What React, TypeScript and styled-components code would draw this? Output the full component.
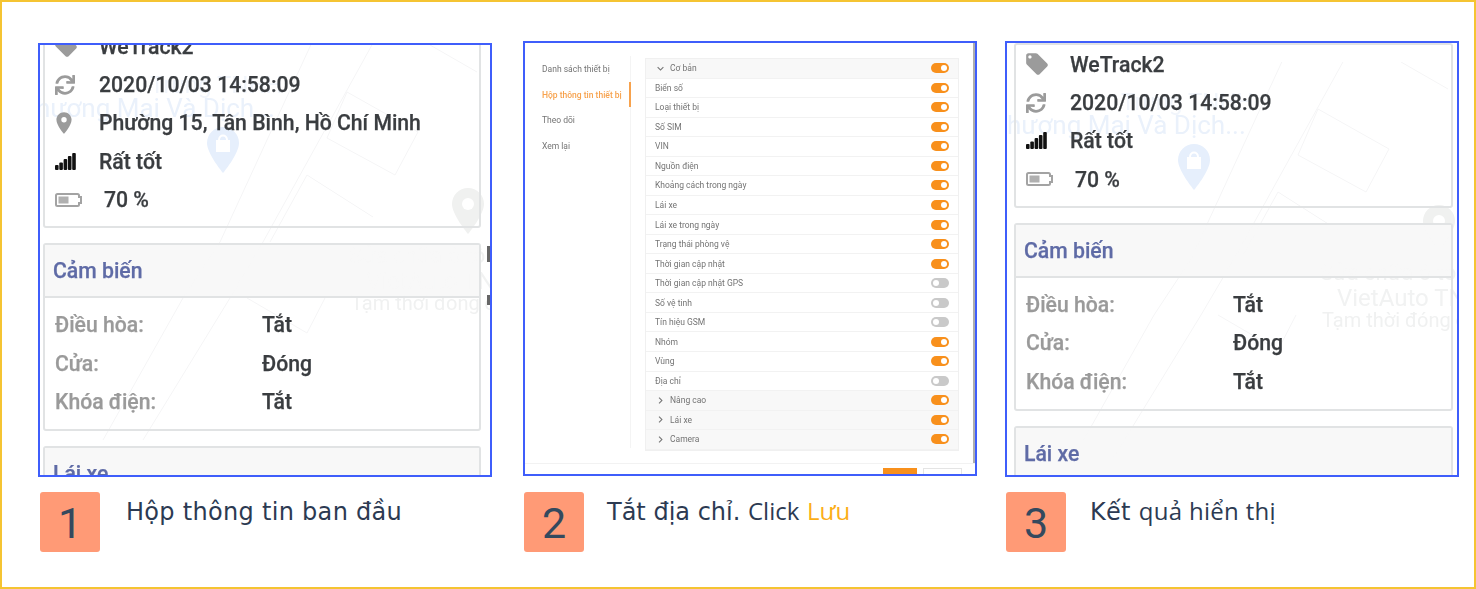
import React from 'react'
import styled, { createGlobalStyle } from 'styled-components'
import { FaSync } from 'react-icons/fa'
import { MdLocalOffer, MdLocationOn, MdKeyboardArrowDown, MdKeyboardArrowRight } from 'react-icons/md'

const GlobalStyle = createGlobalStyle`
  * { box-sizing: border-box; }
  html, body { margin: 0; background: #fff; overflow: hidden; }
`

const Page = styled.div`
  width: 1476px;
  height: 589px;
  border: 2px solid #f5c432;
  padding: 39px 0 0 36px;
  display: grid;
  grid-template-columns: 485px 482px 454px;
  font-family: Roboto, "Liberation Sans", sans-serif;
`

const Column = styled.section`
  display: grid;
  grid-template-rows: 436px auto;
  row-gap: 15px;
  width: 454px;
`

const Frame = styled.div<{ $top: number; $height: number }>`
  position: relative;
  margin-top: ${p => p.$top}px;
  height: ${p => p.$height}px;
  border: 2px solid #3f5efb;
  overflow: hidden;
  background: #fff;
`

const Blurred = styled.div<{ $blur: number }>`
  position: relative;
  display: flow-root;
  height: 100%;
  filter: blur(${p => p.$blur}px);
`

/* map behind the device cards */
const MapLayer = styled.div<{ $dx: number; $dy: number }>`
  position: absolute;
  left: ${p => p.$dx}px;
  top: ${p => p.$dy}px;
  width: 480px;
  height: 460px;
`

const MapLines = styled.svg`
  position: absolute;
  inset: 0;
`

const MapLabel = styled.span<{ $x: number; $y: number; $size: number; $color: string }>`
  position: absolute;
  left: ${p => p.$x}px;
  top: ${p => p.$y}px;
  font-size: ${p => p.$size}px;
  line-height: 1;
  color: ${p => p.$color};
  white-space: nowrap;
`

const MapPin = styled.svg<{ $x: number; $y: number }>`
  position: absolute;
  left: ${p => p.$x}px;
  top: ${p => p.$y}px;
`

const EdgeMark = styled.i<{ $y: number; $h: number }>`
  position: absolute;
  right: 0;
  top: ${p => p.$y}px;
  width: 3px;
  height: ${p => p.$h}px;
  background: #666;
`

const Sheet = styled.div<{ $top: number; $left: number; $width: number }>`
  position: relative;
  margin: ${p => p.$top}px 0 0 ${p => p.$left}px;
  width: ${p => p.$width}px;
  display: flex;
  flex-direction: column;
  gap: 15px;
`

const Card = styled.div`
  border: 2px solid #e1e3e4;
  border-radius: 3px;
`

const InfoCard = styled(Card)`
  padding: 0 0 7.5px 10px;
`

const InfoRow = styled.div`
  height: 38.4px;
  display: flex;
  align-items: center;
`

const InfoIcon = styled.span`
  width: 44px;
  display: flex;
  align-items: center;
  color: #9b9b9b;
`

const InfoText = styled.span<{ $indent?: number }>`
  padding-left: ${p => p.$indent || 0}px;
  font-size: 21.2px;
  font-weight: 500;
  color: #3a3d40;
  -webkit-text-stroke: 0.25px #3a3d40;
  white-space: nowrap;
`

const CardHeader = styled.div`
  height: 53px;
  padding-left: 8px;
  display: flex;
  align-items: center;
  background: rgba(248, 248, 248, 0.96);
  border-bottom: 2px solid #e1e3e4;
  font-size: 21.2px;
  font-weight: 500;
  color: #5f6ba6;
  -webkit-text-stroke: 0.25px #5f6ba6;
`

const CardBody = styled.div`
  padding: 7px 10px 8px;
`

const SensorRow = styled.div`
  height: 38.5px;
  display: grid;
  grid-template-columns: 207px 1fr;
  align-items: center;
  font-size: 21.2px;
  font-weight: 500;
`

const SensorLabel = styled.span`
  color: #9a9a9a;
  -webkit-text-stroke: 0.25px #9a9a9a;
`

const SensorValue = styled.span`
  color: #3a3d40;
  -webkit-text-stroke: 0.25px #3a3d40;
`

const Step = styled.div`
  display: flex;
  align-items: flex-start;
`

const Badge = styled.div<{ $left: number; $gap: number }>`
  margin: 0 ${p => p.$gap}px 0 ${p => p.$left}px;
  width: 60px;
  height: 60px;
  flex: none;
  border-radius: 3px;
  background: #ff9a76;
  color: #34495e;
  font-family: Roboto, "Liberation Sans", sans-serif;
  font-size: 43px;
  line-height: 62px;
  text-align: center;
`

const StepText = styled.div<{ $spacing?: number; $top?: number }>`
  margin-top: ${p => p.$top || 0}px;
  font-family: "DejaVu Sans", sans-serif;
  font-size: 24px;
  line-height: 38px;
  letter-spacing: ${p => p.$spacing || 0}px;
  color: #2c3a52;
  white-space: nowrap;
`

const Thin = styled.span<{ $accent?: boolean }>`
  font-family: "Open Sans", sans-serif;
  color: ${p => (p.$accent ? '#fbae17' : '#2c3a52')};
`

/* settings dialog in the second picture */
const Dialog = styled.div`
  height: 420px;
  padding: 15px 0 0 17px;
  display: flex;
  align-items: flex-start;
  border-right: 2px solid #aeaeae;
  font-size: 8.5px;
  color: #747474;
`

const Menu = styled.nav`
  width: 89px;
  height: 392px;
  margin-top: -2px;
  flex: none;
  display: flex;
  flex-direction: column;
  border-right: 1px solid #f4f4f4;
`

const MenuItem = styled.div<{ $active?: boolean }>`
  height: 25.7px;
  margin-right: -1px;
  display: flex;
  align-items: center;
  white-space: nowrap;
  color: ${p => (p.$active ? '#f7a24d' : '#747474')};
  font-weight: ${p => (p.$active ? 500 : 400)};
  border-right: 2px solid ${p => (p.$active ? '#f7a24d' : 'transparent')};
`

const Panel = styled.div`
  width: 314px;
  margin-left: 14px;
  flex: none;
  border: 1px solid #f0f0f0;
`

const PanelRow = styled.div<{ $section?: boolean }>`
  height: 19.54px;
  padding: 0 9px;
  display: flex;
  align-items: center;
  border-bottom: 1px solid #f2f2f2;
  background: ${p => (p.$section ? '#f8f8f8' : '#fff')};
`

const Chevron = styled.span`
  width: 15px;
  margin-left: -1px;
  margin-right: 1px;
  display: flex;
  align-items: center;
  color: #777;
`

const RowLabel = styled.span`
  flex: 1;
  white-space: nowrap;
`

const Toggle = styled.span<{ $on: boolean }>`
  width: 18px;
  height: 10px;
  border-radius: 5px;
  padding: 2px;
  display: flex;
  justify-content: ${p => (p.$on ? 'flex-end' : 'flex-start')};
  background: ${p => (p.$on ? '#f8901c' : '#c9c9c9')};

  &::after {
    content: '';
    width: 6px;
    height: 6px;
    border-radius: 50%;
    background: #fff;
  }
`

const DialogFooter = styled.div`
  height: 13px;
  padding: 4px 13px 0 0;
  display: flex;
  justify-content: flex-end;
  gap: 6px;
  border-top: 1px solid #f2f2f2;
`

const FooterButton = styled.span<{ $primary?: boolean }>`
  width: ${p => (p.$primary ? 34 : 39)}px;
  height: 22px;
  text-align: center;
  font-size: 9px;
  line-height: 20px;
  border: 1px solid ${p => (p.$primary ? '#f8901c' : '#e4e4e4')};
  background: ${p => (p.$primary ? '#f8901c' : '#fff')};
  color: ${p => (p.$primary ? '#fff' : '#777')};
`

const SignalIcon = () => (
  <svg width="21" height="17" viewBox="0 0 21 17">
    <rect x="0" y="12" width="3.6" height="5" rx="1" fill="#111" />
    <rect x="4.300" y="9.500" width="3.600" height="7.500" rx="1" fill="#111" />
    <rect x="8.600" y="6" width="3.600" height="11" rx="1" fill="#111" />
    <rect x="12.900" y="3" width="3.600" height="14" rx="1" fill="#111" />
    <rect x="17.200" y="0" width="3.600" height="17" rx="1" fill="#111" />
  </svg>
)

const BatteryIcon = () => (
  <svg width="27" height="14" viewBox="0 0 27 14">
    <path d="M2.500 1h20a1.500 1.500 0 0 1 1.500 1.500V4h2v6h-2v1.500a1.500 1.500 0 0 1-1.500 1.500h-20A1.500 1.500 0 0 1 1 11.500v-9A1.500 1.500 0 0 1 2.500 1z" fill="none" stroke="#a3a3a3" strokeWidth="2" />
    <rect x="3.500" y="3.500" width="10" height="7" fill="#b0b0b0" />
  </svg>
)

const MapBackdrop: React.FC<{ dx: number; dy: number }> = ({ dx, dy }) => (
  <MapLayer $dx={dx} $dy={dy}>
    <MapLines width="480" height="460" viewBox="0 0 480 460">
      <path
        d="M280 -20 L180 197 L143 253 L63 395 M343 -20 L223 197 L190 253 L103 395 M307 47 L378 87 L355 130 L287 93 Z M267 130 L333 172 M267 130 L230 197 M207 253 L267 288 L285 253 M390 0 L437 27"
        fill="none"
        stroke="#f5f5f6"
        strokeWidth="1"
      />
    </MapLines>
    <MapLabel $x={-4} $y={50} $size={26} $color="#eaf1fb">hương Mại Và Dịch...</MapLabel>
    <MapLabel $x={110} $y={28} $size={24} $color="#f1f5fb">Trung TNHH</MapLabel>
    <MapPin $x={167} $y={82} width="32" height="46" viewBox="0 0 32 46">
      <path d="M16 0C7 0 0 7 0 16c0 11 16 30 16 30s16-19 16-30C32 7 25 0 16 0z" fill="#e6effc" />
      <path d="M9 13h14v12H9z" fill="#fff" />
      <path d="M12 13c0-6 8-6 8 0" fill="none" stroke="#fff" strokeWidth="2" />
    </MapPin>
    <MapPin $x={412} $y={143} width="32" height="46" viewBox="0 0 32 46">
      <path d="M16 0C7 0 0 7 0 16c0 11 16 30 16 30s16-19 16-30C32 7 25 0 16 0z" fill="#f0f1f0" />
      <circle cx="16" cy="16" r="6" fill="#fff" />
    </MapPin>
    <MapLabel $x={309} $y={200} $size={22} $color="#f1f2f2">Sửa chữa ô tô</MapLabel>
    <MapLabel $x={326} $y={224} $size={24} $color="#f1f2f2">VietAuto TNHH</MapLabel>
    <MapLabel $x={311} $y={248} $size={20} $color="#f0f1f1">Tạm thời đóng cửa</MapLabel>
  </MapLayer>
)

const SensorCard = () => (
  <Card>
    <CardHeader>Cảm biến</CardHeader>
    <CardBody>
      <SensorRow><SensorLabel>Điều hòa:</SensorLabel><SensorValue>Tắt</SensorValue></SensorRow>
      <SensorRow><SensorLabel>Cửa:</SensorLabel><SensorValue>Đóng</SensorValue></SensorRow>
      <SensorRow><SensorLabel>Khóa điện:</SensorLabel><SensorValue>Tắt</SensorValue></SensorRow>
    </CardBody>
  </Card>
)

const DeviceSheet: React.FC<{ top: number; left: number; width: number; address?: string }> = ({ top, left, width, address }) => (
  <Sheet $top={top} $left={left} $width={width}>
    <InfoCard>
      <InfoRow>
        <InfoIcon><MdLocalOffer size={26} style={{ marginLeft: -2 }} /></InfoIcon>
        <InfoText>WeTrack2</InfoText>
      </InfoRow>
      <InfoRow>
        <InfoIcon><FaSync size={20} /></InfoIcon>
        <InfoText>2020/10/03 14:58:09</InfoText>
      </InfoRow>
      {address && (
        <InfoRow>
          <InfoIcon><MdLocationOn size={26} style={{ marginLeft: -4 }} /></InfoIcon>
          <InfoText>{address}</InfoText>
        </InfoRow>
      )}
      <InfoRow>
        <InfoIcon><SignalIcon /></InfoIcon>
        <InfoText>Rất tốt</InfoText>
      </InfoRow>
      <InfoRow>
        <InfoIcon><BatteryIcon /></InfoIcon>
        <InfoText $indent={5}>70 %</InfoText>
      </InfoRow>
    </InfoCard>
    <SensorCard />
    <Card>
      <CardHeader>Lái xe</CardHeader>
    </Card>
  </Sheet>
)

const basicRows: [string, boolean][] = [
  ['Biển số', true],
  ['Loại thiết bị', true],
  ['Số SIM', true],
  ['VIN', true],
  ['Nguồn điện', true],
  ['Khoảng cách trong ngày', true],
  ['Lái xe', true],
  ['Lái xe trong ngày', true],
  ['Trạng thái phòng vệ', true],
  ['Thời gian cập nhật', true],
  ['Thời gian cập nhật GPS', false],
  ['Số vệ tinh', false],
  ['Tín hiệu GSM', false],
  ['Nhóm', true],
  ['Vùng', true],
  ['Địa chỉ', false],
]

const SettingsDialog = () => (
  <>
    <Dialog>
      <Menu>
        <MenuItem>Danh sách thiết bị</MenuItem>
        <MenuItem $active>Hộp thông tin thiết bị</MenuItem>
        <MenuItem>Theo dõi</MenuItem>
        <MenuItem>Xem lại</MenuItem>
      </Menu>
      <Panel>
        <PanelRow $section>
          <Chevron><MdKeyboardArrowDown size={13} /></Chevron>
          <RowLabel>Cơ bản</RowLabel>
          <Toggle $on />
        </PanelRow>
        {basicRows.map(([label, on]) => (
          <PanelRow key={label}>
            <RowLabel>{label}</RowLabel>
            <Toggle $on={on} />
          </PanelRow>
        ))}
        {['Nâng cao', 'Lái xe', 'Camera'].map(label => (
          <PanelRow $section key={label}>
            <Chevron><MdKeyboardArrowRight size={13} /></Chevron>
            <RowLabel>{label}</RowLabel>
            <Toggle $on />
          </PanelRow>
        ))}
      </Panel>
    </Dialog>
    <DialogFooter>
      <FooterButton $primary>Lưu</FooterButton>
      <FooterButton>Hủy</FooterButton>
    </DialogFooter>
  </>
)

const App: React.FC = () => {
  return (
    <Page>
      <GlobalStyle />
      <Column>
        <Frame $top={2} $height={434}>
          <Blurred $blur={0.6}>
            <MapBackdrop dx={0} dy={0} />
            <DeviceSheet top={-20} left={3} width={438} address="Phường 15, Tân Bình, Hồ Chí Minh" />
            <EdgeMark $y={201} $h={16} />
            <EdgeMark $y={250} $h={10} />
          </Blurred>
        </Frame>
        <Step>
          <Badge $left={2} $gap={26}>1</Badge>
          <StepText $spacing={0.3} $top={1}>Hộp thông tin ban đầu</StepText>
        </Step>
      </Column>
      <Column>
        <Frame $top={0} $height={435}>
          <Blurred $blur={0.7}>
            <SettingsDialog />
          </Blurred>
        </Frame>
        <Step>
          <Badge $left={1} $gap={23}>2</Badge>
          <StepText>Tắt địa chỉ. <Thin>Click</Thin> <Thin $accent>Lưu</Thin></StepText>
        </Step>
      </Column>
      <Column>
        <Frame $top={0} $height={436}>
          <Blurred $blur={0.6}>
            <MapBackdrop dx={4} dy={19} />
            <DeviceSheet top={0} left={7} width={439} />
          </Blurred>
        </Frame>
        <Step>
          <Badge $left={1} $gap={24}>3</Badge>
          <StepText $spacing={0.3}>Kết <Thin>quả hiển thị</Thin></StepText>
        </Step>
      </Column>
    </Page>
  )
}

export default App
